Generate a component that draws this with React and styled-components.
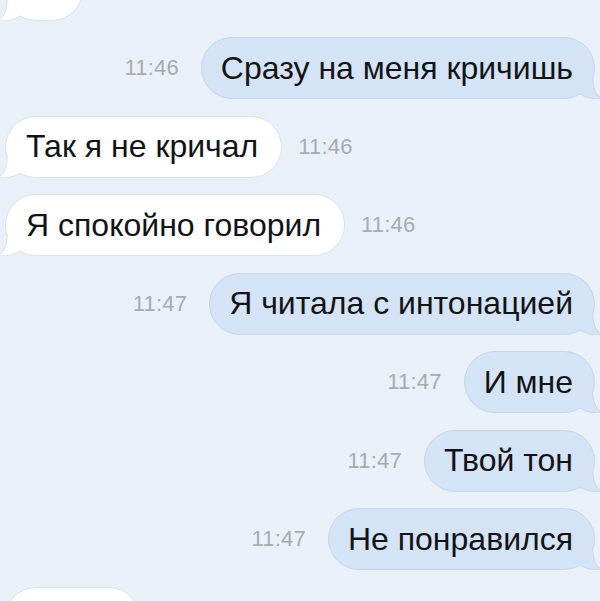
import styled, {createGlobalStyle} from 'styled-components';

const GlobalStyle = createGlobalStyle`
	html, body {
		margin: 0;
		padding: 0;
		background: #eaf0f8;
	}
	body {
		font-family: 'Liberation Sans', Arial, sans-serif;
	}
`;

const CsScreen = styled.div`
	width: 600px;
	height: 601px;
	overflow: hidden;
	background: #eaf0f8;
`;

const CsList = styled.div`
	display: flex;
	flex-direction: column;
	gap: 16.5px;
	margin-top: -41.5px;
	padding: 0 5px;
`;

const CsRow = styled.div`
	display: flex;
	align-items: center;
	justify-content: ${({$out}) => ($out ? 'flex-end' : 'flex-start')};
	gap: ${({$out}) => ($out ? '22px' : '16px')};
`;

const CsTime = styled.span`
	font-size: 22px;
	color: #a7abb1;
	letter-spacing: 0.2px;
`;

const CsBubble = styled.div`
	position: relative;
	box-sizing: border-box;
	height: 62px;
	display: flex;
	align-items: center;
	padding: ${({$out}) => ($out ? '0 21px 0 19px' : '0 23px 0 20px')};
	width: ${({$width}) => ($width ? `${$width}px` : 'auto')};
	border-radius: 31px;
	font-size: 32px;
	color: #121316;
	white-space: nowrap;
	background: ${({$out}) => ($out ? '#d4e3f6' : '#ffffff')};
	border: 1px solid ${({$out}) => ($out ? '#c5d5eb' : '#dde2e8')};
`;

const CsTail = styled.svg`
	position: absolute;
	bottom: -1px;
	width: 24px;
	height: 22px;
	${({$out}) => ($out ? 'right: -8px;' : 'left: -8px; transform: scaleX(-1);')}
	path.fill {
		fill: ${({$out}) => ($out ? '#d4e3f6' : '#ffffff')};
	}
	path.line {
		fill: none;
		stroke: ${({$out}) => ($out ? '#c5d5eb' : '#dde2e8')};
		stroke-width: 1;
	}
`;

const Tail = ({out}) => (
	<CsTail $out={out} viewBox='0 0 24 22'>
		<path className='fill' d='M14.7 0 C14.7 10 17 17 23.5 21.5 C16 22.5 8 21 2 17 L2 0 Z' />
		<path className='line' d='M14.7 0 C14.7 10 17 17 23.5 21.5 C16 22.5 8 21 2 17' />
	</CsTail>
);

const messages = [
	{out: false, text: '', time: '', width: 78},
	{out: true, text: 'Сразу на меня кричишь', time: '11:46'},
	{out: false, text: 'Так я не кричал', time: '11:46'},
	{out: false, text: 'Я спокойно говорил', time: '11:46'},
	{out: true, text: 'Я читала с интонацией', time: '11:47'},
	{out: true, text: 'И мне', time: '11:47'},
	{out: true, text: 'Твой тон', time: '11:47'},
	{out: true, text: 'Не понравился', time: '11:47'},
	{out: false, text: '', time: '', width: 135},
];

const Message = ({out, text, time, width}) => (
	<CsRow $out={out}>
		{out && time && <CsTime>{time}</CsTime>}
		<CsBubble $out={out} $width={width}>
			{text}
			<Tail out={out} />
		</CsBubble>
		{!out && time && <CsTime>{time}</CsTime>}
	</CsRow>
);

export default function App() {
	return (
		<CsScreen>
			<GlobalStyle />
			<CsList>
				{messages.map((m, i) => (
					<Message key={i} {...m} />
				))}
			</CsList>
		</CsScreen>
	);
}
